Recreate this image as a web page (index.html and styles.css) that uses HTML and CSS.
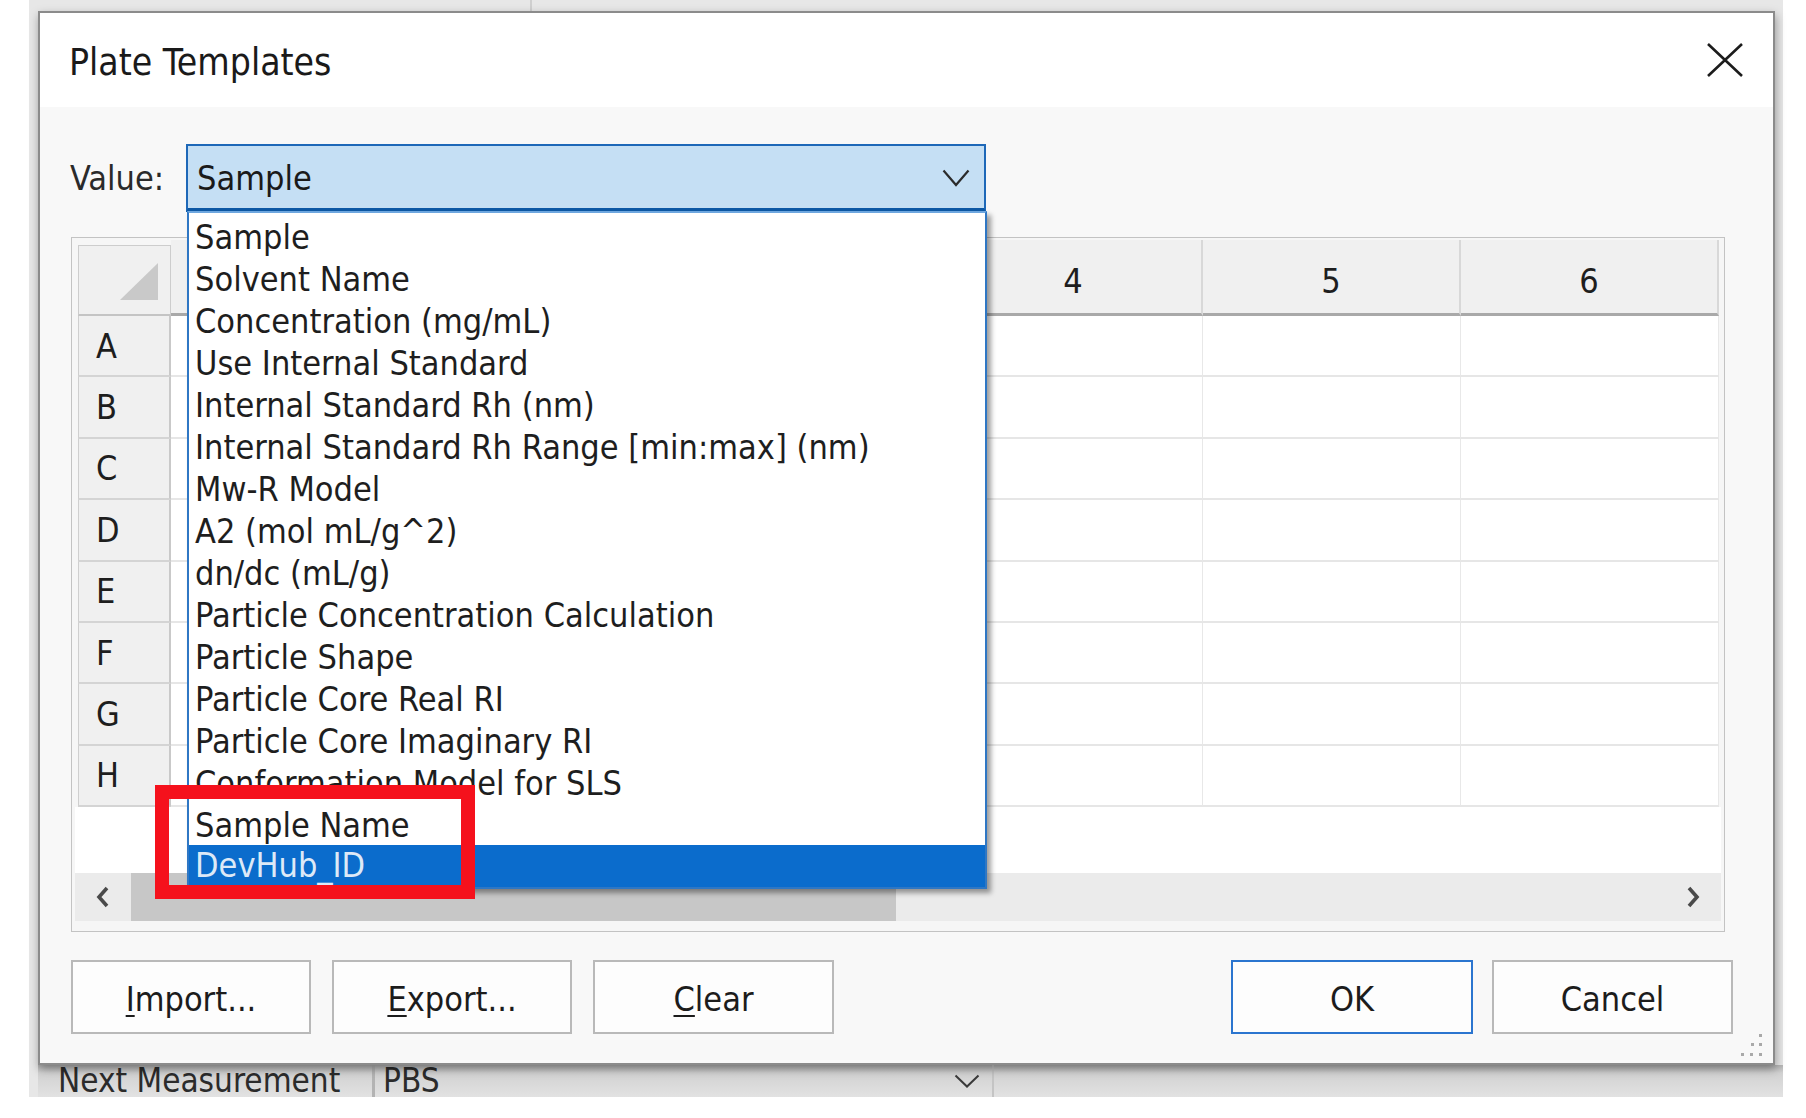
FILE: index.html
```html
<!DOCTYPE html>
<html>
<head>
<meta charset="utf-8">
<title>Plate Templates</title>
<link rel="stylesheet" href="styles.css">
</head>
<body>
<div class="desktop">
  <div class="dialog">
    <div class="titlebar">
      <span class="title">Plate Templates</span>
      <svg class="close" width="38" height="36" viewBox="0 0 38 36"><path d="M2 2 L36 34 M36 2 L2 34" stroke="#1c1c1c" stroke-width="2.6" fill="none"/></svg>
    </div>
    <div class="body">
      <div class="value-row">
        <span class="value-label">Value:</span>
        <div class="combo">
          <span class="combo-text">Sample</span>
          <svg class="combo-chevron" width="28" height="18" viewBox="0 0 28 18"><polyline points="1.5,1.5 14,16 26.5,1.5" stroke="#2b2b2b" stroke-width="2.2" fill="none"/></svg>
        </div>
        <ul class="dropdown">
          <li>Sample</li>
          <li>Solvent Name</li>
          <li>Concentration (mg/mL)</li>
          <li>Use Internal Standard</li>
          <li>Internal Standard Rh (nm)</li>
          <li>Internal Standard Rh Range [min:max] (nm)</li>
          <li>Mw-R Model</li>
          <li>A2 (mol mL/g^2)</li>
          <li>dn/dc (mL/g)</li>
          <li>Particle Concentration Calculation</li>
          <li>Particle Shape</li>
          <li>Particle Core Real RI</li>
          <li>Particle Core Imaginary RI</li>
          <li>Conformation Model for SLS</li>
          <li>Sample Name</li>
          <li class="selected">DevHub_ID</li>
        </ul>
        <div class="callout"></div>
      </div>

      <div class="grid-panel">
        <div class="grid">
          <div class="corner"><span class="corner-tri"></span></div>
          <div class="col-head"></div>
          <div class="col-head"></div>
          <div class="col-head"></div>
          <div class="col-head">4</div>
          <div class="col-head">5</div>
          <div class="col-head">6</div>

          <div class="row-head">A</div><div class="cell"></div><div class="cell"></div><div class="cell"></div><div class="cell"></div><div class="cell"></div><div class="cell"></div>
          <div class="row-head">B</div><div class="cell"></div><div class="cell"></div><div class="cell"></div><div class="cell"></div><div class="cell"></div><div class="cell"></div>
          <div class="row-head">C</div><div class="cell"></div><div class="cell"></div><div class="cell"></div><div class="cell"></div><div class="cell"></div><div class="cell"></div>
          <div class="row-head">D</div><div class="cell"></div><div class="cell"></div><div class="cell"></div><div class="cell"></div><div class="cell"></div><div class="cell"></div>
          <div class="row-head">E</div><div class="cell"></div><div class="cell"></div><div class="cell"></div><div class="cell"></div><div class="cell"></div><div class="cell"></div>
          <div class="row-head">F</div><div class="cell"></div><div class="cell"></div><div class="cell"></div><div class="cell"></div><div class="cell"></div><div class="cell"></div>
          <div class="row-head">G</div><div class="cell"></div><div class="cell"></div><div class="cell"></div><div class="cell"></div><div class="cell"></div><div class="cell"></div>
          <div class="row-head">H</div><div class="cell"></div><div class="cell"></div><div class="cell"></div><div class="cell"></div><div class="cell"></div><div class="cell"></div>
        </div>
        <div class="grid-empty"></div>
        <div class="hscroll">
          <div class="scroll-arrow"><svg width="14" height="22" viewBox="0 0 14 22"><polyline points="11,2 3,11 11,20" stroke="#4a4a4a" stroke-width="3.6" fill="none"/></svg></div>
          <div class="scroll-thumb"></div>
          <div class="scroll-track"></div>
          <div class="scroll-arrow"><svg width="14" height="22" viewBox="0 0 14 22"><polyline points="3,2 11,11 3,20" stroke="#4a4a4a" stroke-width="3.6" fill="none"/></svg></div>
        </div>
      </div>

      <div class="buttons">
        <div class="btn-group left">
          <div class="btn w240"><u>I</u>mport...</div>
          <div class="btn w240"><u>E</u>xport...</div>
          <div class="btn w241"><u>C</u>lear</div>
        </div>
        <div class="btn-group right">
          <div class="btn btn-default w242">OK</div>
          <div class="btn w241">Cancel</div>
        </div>
      </div>
    </div>
    <svg class="grip" width="30" height="28" viewBox="0 0 30 28">
      <rect x="24" y="2" width="3" height="3" fill="#a9a9a9"/>
      <rect x="16" y="11" width="3" height="3" fill="#a9a9a9"/>
      <rect x="24" y="11" width="3" height="3" fill="#a9a9a9"/>
      <rect x="6" y="21" width="3" height="3" fill="#a9a9a9"/>
      <rect x="15" y="21" width="3" height="3" fill="#a9a9a9"/>
      <rect x="24" y="21" width="3" height="3" fill="#a9a9a9"/>
    </svg>
  </div>
  <div class="next-row">
    <span class="next-label">Next Measurement</span>
    <span class="next-divider"></span>
    <span class="next-value">PBS</span>
    <svg class="next-chevron" width="26" height="14" viewBox="0 0 26 14"><polyline points="1.5,1.5 13,12.5 24.5,1.5" stroke="#3a3a3a" stroke-width="2" fill="none"/></svg>
    <span class="next-end"></span>
  </div>
</div>
</body>
</html>
```
FILE: styles.css
```css
html, body {
  margin: 0;
  padding: 0;
  background: #ffffff;
  overflow: hidden;
}

body {
  width: 1806px;
  height: 1118px;
  font-family: "DejaVu Sans Condensed", "DejaVu Sans", sans-serif;
  color: #1c1c1c;
}

/* background application */
.desktop {
  margin-left: 29px;
  width: 1754px;
  height: 1097px;
  padding: 11px 0 0 9px;
  box-sizing: border-box;
  background:
    linear-gradient(to right, transparent 501px, #cfcfcf 501px, #cfcfcf 503px, transparent 503px),
    #e7e7e7;
  display: flex;
  flex-direction: column;
}

/* dialog window */
.dialog {
  position: relative;
  width: 1737px;
  height: 1054px;
  box-sizing: border-box;
  border: 2px solid #8b8b8b;
  background: #f8f8f8;
  box-shadow: 1px 4px 9px rgba(0, 0, 0, 0.35);
  display: flex;
  flex-direction: column;
  flex-shrink: 0;
  z-index: 1;
}

.titlebar {
  height: 94px;
  flex-shrink: 0;
  background: #ffffff;
  display: flex;
  justify-content: space-between;
  align-items: flex-start;
  padding: 0 29px;
}

.title {
  margin-top: 28px;
  font-size: 37px;
  line-height: 44px;
  color: #1a1a1a;
}

.close {
  margin-top: 29px;
  display: block;
}

.body {
  flex: 1;
  display: flex;
  flex-direction: column;
  padding: 37px 40px 0 31px;
  background: #f8f8f8;
}

/* value selector */
.value-row {
  position: relative;
  height: 68px;
  display: flex;
  align-items: center;
  z-index: 2;
}

.value-label {
  width: 116px;
  font-size: 34px;
  line-height: 40px;
  color: #2a2a2a;
  margin-left: -1px;
}

.combo {
  width: 800px;
  height: 68px;
  box-sizing: border-box;
  border: 2px solid #1e68b8;
  border-bottom: 4px solid #0d58a5;
  background: #c5dff4;
  display: flex;
  align-items: center;
  justify-content: space-between;
  padding: 2px 14px 0 9px;
}

.combo-text {
  font-size: 34px;
  line-height: 40px;
  color: #1a1a1a;
}

.combo-chevron {
  display: block;
}

.dropdown {
  position: absolute;
  left: 116px;
  top: 67px;
  width: 800px;
  margin: 0;
  padding: 2px 0 0 0;
  list-style: none;
  box-sizing: border-box;
  border: 2px solid #2f77c4;
  border-top-color: #6ea7df;
  background: #ffffff;
  box-shadow: 4px 4px 5px rgba(0, 0, 0, 0.38);
}

.dropdown li {
  height: 42px;
  box-sizing: border-box;
  padding: 3px 0 0 6px;
  font-size: 34px;
  line-height: 38px;
  white-space: nowrap;
  color: #1e1e1e;
}

.dropdown li.selected {
  padding-top: 1px;
  background: #0b6ccc;
  color: #dde9f7;
}

.callout {
  position: absolute;
  left: 84px;
  top: 641px;
  width: 320px;
  height: 114px;
  box-sizing: border-box;
  border: 14px solid #f5111c;
}

/* plate grid */
.grid-panel {
  margin-top: 25px;
  width: 1654px;
  height: 695px;
  box-sizing: border-box;
  border: 1px solid #c3c3c3;
  background: #f6f6f6;
  padding: 2px 3px 0 3px;
  display: flex;
  flex-direction: column;
}

.grid {
  margin-left: 3px;
  display: grid;
  grid-template-columns: 93px repeat(6, 258px);
  grid-template-rows: 76px repeat(8, 61.375px);
}

.corner {
  position: relative;
  margin-top: 5px;
  background: #f0f0f0;
  border: 1px solid #cdcdcd;
  border-bottom: 2px solid #c4c4c4;
}

.corner-tri {
  position: absolute;
  right: 12px;
  bottom: 14px;
  width: 0;
  height: 0;
  border-left: 38px solid transparent;
  border-bottom: 37px solid #c9c9c9;
}

.col-head {
  background: #f0f0f0;
  border-right: 2px solid #d8d8d8;
  border-bottom: 3px solid #a9a9a9;
  display: flex;
  align-items: center;
  justify-content: center;
  padding-top: 9px;
  font-size: 34px;
  color: #1e1e1e;
}

.row-head {
  background: #f0f0f0;
  border-left: 1px solid #cfcfcf;
  border-right: 2px solid #c9c9c9;
  border-bottom: 2px solid #d4d4d4;
  display: flex;
  align-items: center;
  padding: 0 0 0 17px;
  font-size: 34px;
  color: #1e1e1e;
}

.cell {
  background: #ffffff;
  border-right: 1px solid #e8e8e8;
  border-bottom: 2px solid #e6e6e6;
}

.grid-empty {
  height: 66px;
  background: #ffffff;
}

.hscroll {
  height: 48px;
  display: flex;
  background: #ebebeb;
}

.scroll-arrow {
  width: 56px;
  display: flex;
  align-items: center;
  justify-content: center;
}

.scroll-arrow svg {
  display: block;
}

.scroll-thumb {
  width: 765px;
  background: #c7c7c7;
}

.scroll-track {
  flex: 1;
}

/* buttons */
.buttons {
  margin-top: 28px;
  height: 74px;
  display: flex;
  justify-content: space-between;
}

.btn-group {
  display: flex;
}

.btn-group.left {
  gap: 21px;
}

.btn-group.right {
  gap: 19px;
}

.btn {
  height: 74px;
  box-sizing: border-box;
  border: 2px solid #b9b9b9;
  background: #fdfdfd;
  display: flex;
  align-items: center;
  justify-content: center;
  padding-top: 4px;
  font-size: 34px;
  color: #1c1c1c;
}

.btn u {
  text-decoration-thickness: 2px;
  text-underline-offset: 4px;
}

.btn-default {
  border: 2px solid #2b75cf;
}

.w240 { width: 240px; }
.w241 { width: 241px; }
.w242 { width: 242px; }

.grip {
  position: absolute;
  right: 8px;
  bottom: 3px;
}

/* background app row under the dialog */
.next-row {
  height: 32px;
  display: flex;
  align-items: flex-start;
  background: linear-gradient(to bottom, #b4b4b4 0px, #d2d2d2 8px, #dadada 20px, #e2e2e2 32px);
}

.next-label {
  margin-left: 20px;
  width: 314px;
  height: 32px;
  font-size: 33px;
  line-height: 32px;
  color: #2b2b2b;
  white-space: nowrap;
}

.next-divider {
  width: 3px;
  height: 32px;
  background: #b3b3b3;
}

.next-value {
  margin-left: 8px;
  width: 571px;
  height: 32px;
  font-size: 33px;
  line-height: 32px;
  color: #2b2b2b;
}

.next-chevron {
  display: block;
  margin-top: 9px;
}

.next-end {
  margin-left: 12px;
  width: 2px;
  height: 32px;
  background: #c4c4c4;
}
```
